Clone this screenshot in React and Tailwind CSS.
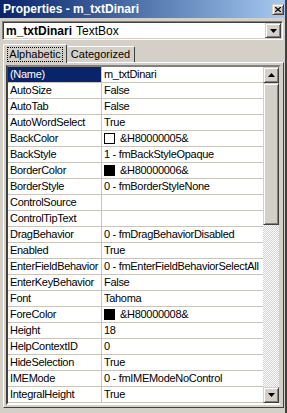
import React from "react";

const raised =
  "border border-t-[#d4d0c8] border-l-[#d4d0c8] border-b-[#404040] border-r-[#404040] shadow-[inset_1px_1px_#ffffff,inset_-1px_-1px_#808080] bg-[#d4d0c8]";

const props = [
  { name: "(Name)", value: "m_txtDinari", selected: true },
  { name: "AutoSize", value: "False" },
  { name: "AutoTab", value: "False" },
  { name: "AutoWordSelect", value: "True" },
  { name: "BackColor", value: "&H80000005&", swatch: "white" },
  { name: "BackStyle", value: "1 - fmBackStyleOpaque" },
  { name: "BorderColor", value: "&H80000006&", swatch: "black" },
  { name: "BorderStyle", value: "0 - fmBorderStyleNone" },
  { name: "ControlSource", value: "" },
  { name: "ControlTipText", value: "" },
  { name: "DragBehavior", value: "0 - fmDragBehaviorDisabled" },
  { name: "Enabled", value: "True" },
  { name: "EnterFieldBehavior", value: "0 - fmEnterFieldBehaviorSelectAll" },
  { name: "EnterKeyBehavior", value: "False" },
  { name: "Font", value: "Tahoma" },
  { name: "ForeColor", value: "&H80000008&", swatch: "black" },
  { name: "Height", value: "18" },
  { name: "HelpContextID", value: "0" },
  { name: "HideSelection", value: "True" },
  { name: "IMEMode", value: "0 - fmIMEModeNoControl" },
  { name: "IntegralHeight", value: "True" },
];

const Arrow = ({ up }) => (
  <svg width="7" height="4" viewBox="0 0 7 4">
    {up ? (
      <polygon points="3.5,0 7,4 0,4" fill="#000" />
    ) : (
      <polygon points="0,0 7,0 3.5,4" fill="#000" />
    )}
  </svg>
);

const PropRow = ({ row }) => (
  <div className="flex h-[16px] border-b border-[#c8c4bc] tracking-[-0.3px]">
    <div
      className={`w-[94px] shrink-0 border-r border-[#c8c4bc] pl-[2px] leading-[15px] whitespace-nowrap overflow-hidden ${
        row.selected ? "bg-[#0a246a] text-white" : "text-black"
      }`}
    >
      {row.name}
    </div>
    <div className="flex-1 flex items-center pl-[2px] whitespace-nowrap overflow-hidden leading-[15px]">
      {row.swatch && (
        <span
          className={`w-[11px] h-[11px] mr-[5px] border border-black shrink-0 ${
            row.swatch === "black" ? "bg-black" : "bg-white"
          }`}
        />
      )}
      {row.value}
    </div>
  </div>
);

export default function App() {
  return (
    <div className="w-[287px] h-[413px] bg-[#d4d0c8] overflow-hidden flex flex-col text-[11px] text-black font-['Liberation_Sans',Arial,sans-serif] border-r-2 border-r-[#404040]">
      {/* title bar */}
      <div className="h-[18px] shrink-0 flex items-center justify-between pl-[3px] pr-[1px] bg-gradient-to-r from-[#0a246a] to-[#a6caf0]">
        <span className="text-white font-bold text-[12px] leading-none">
          Properties - m_txtDinari
        </span>
        <div className={`w-[12px] h-[11px] flex items-center justify-center ${raised}`}>
          <svg width="6" height="5" viewBox="0 0 6 5">
            <path d="M0 0L6 5M6 0L0 5" stroke="#000" strokeWidth="1.3" />
          </svg>
        </div>
      </div>

      {/* object combo */}
      <div className="px-[2px] pt-[3px]">
        <div className="h-[19px] flex items-center bg-white border border-t-[#808080] border-l-[#808080] border-b-white border-r-white shadow-[inset_1px_1px_#404040,inset_-1px_-1px_#d4d0c8]">
          <div className="flex-1 pl-[3px] whitespace-nowrap text-[12px]">
            <span className="font-bold">m_txtDinari</span>
            <span className="ml-[4px]">TextBox</span>
          </div>
          <div className={`w-[16px] h-[15px] mr-[1px] flex items-center justify-center ${raised}`}>
            <Arrow />
          </div>
        </div>
      </div>

      {/* tabs */}
      <div className="flex items-end pl-[3px] mt-[3px] h-[19px] relative z-10">
        <div className="h-[19px] w-[64px] bg-[#d4d0c8] border-t border-l border-white border-r border-r-[#404040] rounded-t-[2px] flex items-center justify-center -mb-[1px]">
          <span className="outline outline-1 outline-dotted outline-black px-[1px] leading-[13px]">
            Alphabetic
          </span>
        </div>
        <div className="h-[16px] w-[68px] border-t border-white border-r border-r-[#404040] rounded-t-[2px] flex items-center justify-center">
          Categorized
        </div>
      </div>

      {/* tab page */}
      <div className="ml-[3px] mr-[1px] h-[346px] border-t border-l border-white border-r border-r-[#404040] border-b border-b-[#404040] p-[2px] flex">
        <div className="flex-1 flex border-2 border-t-[#808080] border-l-[#404040] border-b-white border-r-[#d4d0c8] bg-white overflow-hidden">
          <div className="flex-1 flex flex-col">
            {props.map((row) => (
              <PropRow key={row.name} row={row} />
            ))}
          </div>
          {/* scrollbar */}
          <div className="w-[16px] shrink-0 flex flex-col">
            <div className={`h-[16px] shrink-0 flex items-center justify-center ${raised}`}>
              <Arrow up />
            </div>
            <div className={`h-[142px] shrink-0 ${raised}`} />
            <div className="flex-1 bg-[repeating-conic-gradient(#d4d0c8_0_25%,#ffffff_0_50%)] bg-[length:2px_2px]" />
            <div className={`h-[16px] shrink-0 flex items-center justify-center ${raised}`}>
              <Arrow />
            </div>
          </div>
        </div>
      </div>
    </div>
  );
}
